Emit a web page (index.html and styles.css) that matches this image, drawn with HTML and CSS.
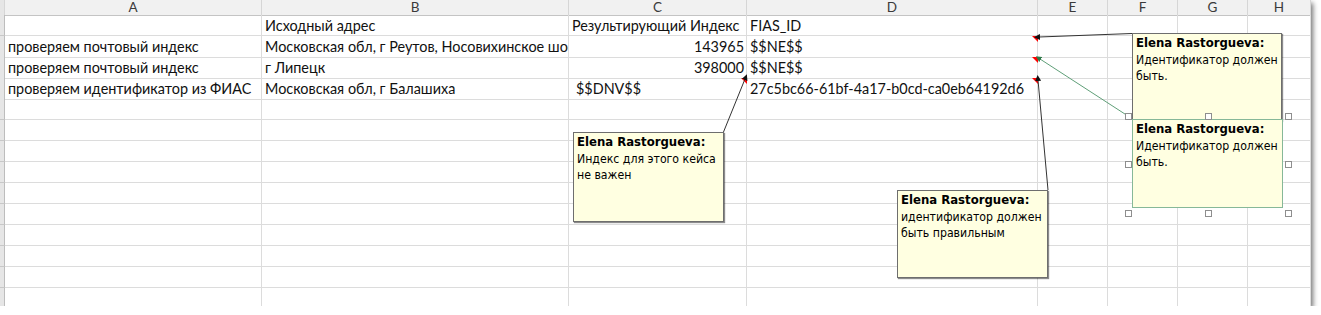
FILE: index.html
```html
<!DOCTYPE html>
<html lang="ru">
<head>
<meta charset="utf-8">
<title>Sheet</title>
<link rel="stylesheet" href="styles.css">
</head>
<body>
<div class="sheet">
  <div class="row hdr">
    <div class="c strip"></div><div class="c">A</div><div class="c">B</div><div class="c">C</div><div class="c">D</div><div class="c">E</div><div class="c">F</div><div class="c">G</div><div class="c">H</div>
  </div>
  <div class="row">
    <div class="c strip"></div><div class="c"></div><div class="c">Исходный адрес</div><div class="c">Результирующий Индекс</div><div class="c">FIAS_ID</div><div class="c"></div><div class="c"></div><div class="c"></div><div class="c"></div>
  </div>
  <div class="row">
    <div class="c strip"></div><div class="c">проверяем почтовый индекс</div><div class="c">Московская обл, г Реутов, Носовихинское шоссе</div><div class="c num">143965</div><div class="c ind">$$NE$$</div><div class="c"></div><div class="c"></div><div class="c"></div><div class="c"></div>
  </div>
  <div class="row">
    <div class="c strip"></div><div class="c">проверяем почтовый индекс</div><div class="c">г Липецк</div><div class="c num">398000</div><div class="c ind">$$NE$$</div><div class="c"></div><div class="c"></div><div class="c"></div><div class="c"></div>
  </div>
  <div class="row">
    <div class="c strip"></div><div class="c">проверяем идентификатор из ФИАС</div><div class="c">Московская обл, г Балашиха</div><div class="c ind indent">$$DNV$$</div><div class="c ind">27c5bc66-61bf-4a17-b0cd-ca0eb64192d6</div><div class="c"></div><div class="c"></div><div class="c"></div><div class="c"></div>
  </div>
  <div class="row"><div class="c strip"></div><div class="c"></div><div class="c"></div><div class="c"></div><div class="c"></div><div class="c"></div><div class="c"></div><div class="c"></div><div class="c"></div></div>
  <div class="row"><div class="c strip"></div><div class="c"></div><div class="c"></div><div class="c"></div><div class="c"></div><div class="c"></div><div class="c"></div><div class="c"></div><div class="c"></div></div>
  <div class="row"><div class="c strip"></div><div class="c"></div><div class="c"></div><div class="c"></div><div class="c"></div><div class="c"></div><div class="c"></div><div class="c"></div><div class="c"></div></div>
  <div class="row"><div class="c strip"></div><div class="c"></div><div class="c"></div><div class="c"></div><div class="c"></div><div class="c"></div><div class="c"></div><div class="c"></div><div class="c"></div></div>
  <div class="row"><div class="c strip"></div><div class="c"></div><div class="c"></div><div class="c"></div><div class="c"></div><div class="c"></div><div class="c"></div><div class="c"></div><div class="c"></div></div>
  <div class="row"><div class="c strip"></div><div class="c"></div><div class="c"></div><div class="c"></div><div class="c"></div><div class="c"></div><div class="c"></div><div class="c"></div><div class="c"></div></div>
  <div class="row"><div class="c strip"></div><div class="c"></div><div class="c"></div><div class="c"></div><div class="c"></div><div class="c"></div><div class="c"></div><div class="c"></div><div class="c"></div></div>
  <div class="row"><div class="c strip"></div><div class="c"></div><div class="c"></div><div class="c"></div><div class="c"></div><div class="c"></div><div class="c"></div><div class="c"></div><div class="c"></div></div>
  <div class="row"><div class="c strip"></div><div class="c"></div><div class="c"></div><div class="c"></div><div class="c"></div><div class="c"></div><div class="c"></div><div class="c"></div><div class="c"></div></div>
  <div class="row"><div class="c strip"></div><div class="c"></div><div class="c"></div><div class="c"></div><div class="c"></div><div class="c"></div><div class="c"></div><div class="c"></div><div class="c"></div></div>

  <svg class="links" width="1311" height="306" viewBox="0 0 1311 306">
    <defs>
      <marker id="ab" markerWidth="6" markerHeight="6" refX="1" refY="3" orient="auto-start-reverse" markerUnits="userSpaceOnUse">
        <path d="M0 0 L6 3 L0 6 Z" fill="#111"/>
      </marker>
      <marker id="ag" markerWidth="6" markerHeight="6" refX="1" refY="3" orient="auto-start-reverse" markerUnits="userSpaceOnUse">
        <path d="M0 0 L6 3 L0 6 Z" fill="#2f7a4a"/>
      </marker>
    </defs>
    <line x1="745" y1="79" x2="723.5" y2="132" stroke="#333" stroke-width="1" marker-start="url(#ab)"/>
    <line x1="1039" y1="37" x2="1132" y2="33.5" stroke="#333" stroke-width="1" marker-start="url(#ab)"/>
    <line x1="1040" y1="59" x2="1128" y2="116" stroke="#5f9f78" stroke-width="1" marker-start="url(#ag)"/>
    <line x1="1038" y1="80" x2="1048" y2="190" stroke="#333" stroke-width="1" marker-start="url(#ab)"/>
  </svg>

  <div class="note n1"><b>Elena Rastorgueva:</b><br>Индекс для этого кейса<br>не важен</div>
  <div class="note n2"><b>Elena Rastorgueva:</b><br>идентификатор должен<br>быть правильным</div>
  <div class="note n3"><b>Elena Rastorgueva:</b><br>Идентификатор должен<br>быть.</div>
  <div class="note n4 selected"><b>Elena Rastorgueva:</b><br>Идентификатор должен<br>быть.
    <span class="hd h1"></span><span class="hd h2"></span><span class="hd h3"></span>
    <span class="hd h4"></span><span class="hd h5"></span>
    <span class="hd h6"></span><span class="hd h7"></span><span class="hd h8"></span>
  </div>
</div>
</body>
</html>
```

FILE: styles.css
```css
html, body {
  margin: 0;
  padding: 0;
  background: #ffffff;
}

.sheet {
  position: relative;
  width: 1311px;
  height: 306px;
  overflow: hidden;
  background: #ffffff;
  box-shadow: 2px 3px 5px rgba(0, 0, 0, 0.55);
  font-family: Lato, "Open Sans", sans-serif;
  font-size: 14.4px;
  color: #111;
}

.row {
  display: grid;
  grid-template-columns: 5px 257px 307px 178px 291px 70px 70px 70px 63px;
  height: 21px;
}

.c {
  position: relative;
  box-sizing: border-box;
  border-right: 1px solid #dcdcdc;
  border-bottom: 1px solid #dcdcdc;
  padding: 0 2px 0 3px;
  white-space: nowrap;
  overflow: hidden;
  line-height: 21px;
}

.row .strip {
  background: #e6e6e6;
  border-right: 1px solid #bdbdbd;
  border-bottom: 1px solid #c8c8c8;
  padding: 0;
}

.hdr {
  height: 15px;
}

.hdr .c {
  background: #f1f1f1;
  border-right: 1px solid #d6d6d6;
  border-bottom: 1px solid #c4c4c4;
  text-align: center;
  line-height: 15px;
  font-size: 13.5px;
  color: #3a3a3a;
  padding: 0;
  overflow: visible;
}

.hdr .strip {
  background: #e6e6e6;
}

.num {
  text-align: right;
}

.indent {
  padding-left: 7px;
}

.ind {
  overflow: visible;
}

.ind::after {
  content: "";
  position: absolute;
  top: 0;
  right: -1px;
  width: 0;
  height: 0;
  border-top: 6px solid #ff0000;
  border-left: 6px solid transparent;
}

.links {
  position: absolute;
  left: 0;
  top: 0;
  pointer-events: none;
}

.note {
  position: absolute;
  box-sizing: border-box;
  background: #ffffe1;
  border: 1px solid #6e6e6e;
  box-shadow: 1px 1px 1px rgba(0, 0, 0, 0.45);
  padding: 1px 3px;
  font-family: "DejaVu Sans Condensed", "DejaVu Sans", Verdana, sans-serif;
  font-stretch: condensed;
  font-size: 12.2px;
  line-height: 16.5px;
  color: #000;
  white-space: nowrap;
}

.note b {
  font-weight: bold;
  font-size: 13px;
}

.n1 { left: 573px; top: 132px; width: 151px; height: 90px; }
.n2 { left: 897px; top: 190px; width: 151px; height: 88px; }
.n3 { left: 1132px; top: 33px; width: 150px; height: 88px; }
.n4 { left: 1132px; top: 119px; width: 151px; height: 89px; border-color: #86b898; box-shadow: none; }

.hd {
  position: absolute;
  box-sizing: border-box;
  width: 7px;
  height: 7px;
  background: #ffffff;
  border: 1px solid #8e8e8e;
}

.h1 { left: -8px; top: -7px; }
.h2 { left: 72px; top: -7px; }
.h3 { left: 152px; top: -7px; }
.h4 { left: -8px; top: 41px; }
.h5 { left: 152px; top: 41px; }
.h6 { left: -8px; top: 90px; }
.h7 { left: 72px; top: 90px; }
.h8 { left: 152px; top: 90px; }
```
